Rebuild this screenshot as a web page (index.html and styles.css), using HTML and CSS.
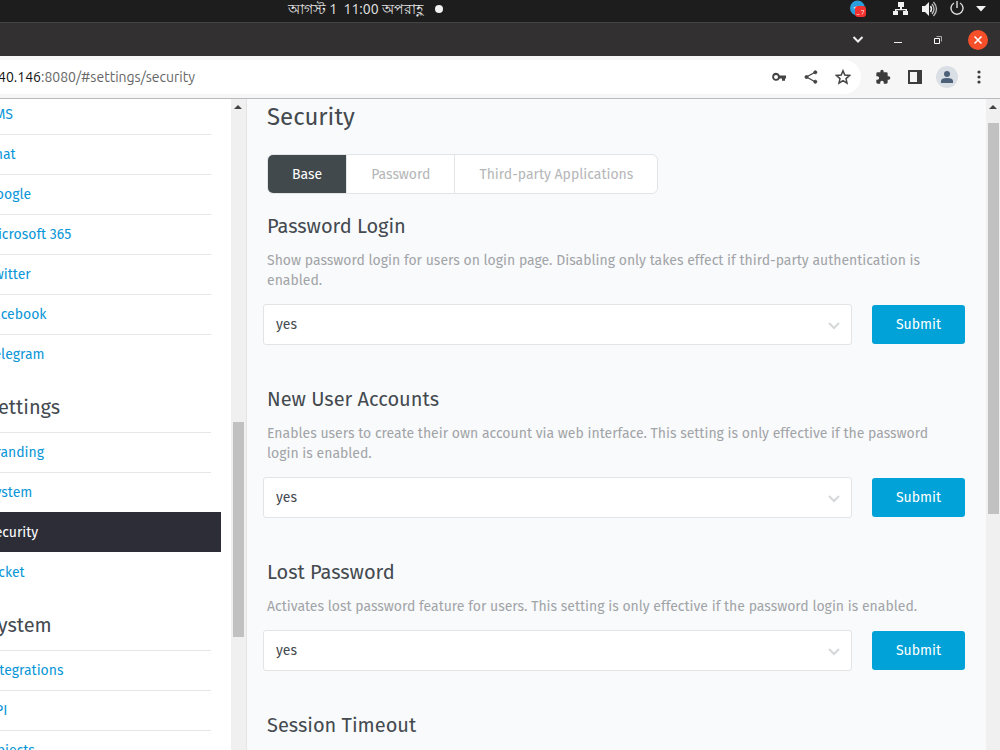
FILE: index.html
```
<!DOCTYPE html>
<html lang="en">
<head>
    <meta charset="UTF-8">
    <meta name="viewport" content="width=device-width, initial-scale=1.0">
    <title>Security</title>
    <link rel="stylesheet" href="styles.css">
</head>
<body>
    <!-- desktop panel -->
    <div class="panel">
        <div class="clock" lang="bn">
            <span>আগস্ট 1&nbsp; 11:00 অপরাহ্ণ</span>
            <span class="dot"></span>
        </div>
        <div class="tray">
            <svg class="tray-chat" width="17" height="17" viewBox="0 0 17 17">
                <circle cx="7.500" cy="8" r="7.500" fill="#2a9fdc"/>
                <path d="M3 8l4-2v3z" fill="#fff"/>
                <rect x="5" y="6" width="11" height="11" rx="3" fill="#f3312f"/>
                <path d="M6.500 14.500h3M11 10.500h3l-2 4" fill="none" stroke="#f9a8a4" stroke-width="1"/>
            </svg>
            <svg class="tray-net" width="16" height="15" viewBox="0 0 16 15" fill="#f2f2f2">
                <rect x="5" y="1" width="6" height="5"/>
                <path d="M7 6h2v2h5v3h-1.500V9.200h-9V11H2V8h5z"/>
                <rect x="0" y="10" width="5" height="4"/>
                <rect x="10" y="10" width="5" height="4"/>
            </svg>
            <svg class="tray-sound" width="17" height="16" viewBox="0 0 17 16">
                <path d="M1 5h3l4-4v14l-4-4H1z" fill="#f2f2f2"/>
                <path d="M9.500 5q2 3 0 6" fill="none" stroke="#f2f2f2" stroke-width="1.500"/>
                <path d="M11 3q4 5 0 10M12.500 1q6 7 0 14" fill="none" stroke="#bbb" stroke-width="1.300"/>
            </svg>
            <svg class="tray-power" width="14" height="16" viewBox="0 0 14 16" fill="none" stroke="#dedede" stroke-width="1.400">
                <path d="M7 0v7M4 2a6 6 0 1 0 6 0"/>
            </svg>
            <svg width="10" height="6" viewBox="0 0 10 6"><path d="M0 0h10L5 5.500z" fill="#f2f2f2"/></svg>
        </div>
    </div>

    <!-- window title bar -->
    <div class="titlebar">
        <button class="win-btn" aria-label="Search tabs">
            <svg width="12" height="12" viewBox="0 0 12 12" fill="none" stroke="#eee" stroke-width="2"><path d="M1.500 3L6 7.500 10.500 3"/></svg>
        </button>
        <button class="win-btn" aria-label="Minimize">
            <svg width="10" height="12" viewBox="0 0 10 12"><path d="M1 8h8v1H1z" fill="#eee"/></svg>
        </button>
        <button class="win-btn" aria-label="Restore">
            <svg width="10" height="10" viewBox="0 0 10 10" fill="none"><path d="M3.500 1.500h5v5" stroke="#aaa"/><path d="M1.500 3.500h5v5h-5z" stroke="#fff"/></svg>
        </button>
        <button class="win-btn win-close" aria-label="Close">
            <svg width="10" height="10" viewBox="0 0 10 10" stroke="#fff" stroke-width="1.500"><path d="M1.500 1.500l7 7M8.500 1.500l-7 7"/></svg>
        </button>
    </div>

    <!-- address bar -->
    <div class="toolbar">
        <div class="omnibox">
            <div class="url"><b>40.146</b>:8080/#settings/security</div>
            <button class="tool" aria-label="Passwords">
                <svg width="16" height="16" viewBox="0 0 16 16"><path fill-rule="evenodd" d="M5 3.800a4 4 0 0 1 3.800 2.700H15v3h-1v2.200h-3V9.500H8.800A4 4 0 1 1 5 3.800zM5 6a2 2 0 1 0 0 4 2 2 0 0 0 0-4z" fill="#444"/></svg>
            </button>
            <button class="tool" aria-label="Share">
                <svg width="14" height="14" viewBox="0 0 14 14" fill="#444" stroke="#444"><path d="M11.500 2L2.500 7l9 5" fill="none" stroke-width="1.300"/><circle cx="11.300" cy="2.300" r="1.500"/><circle cx="2.500" cy="7" r="1.500"/><circle cx="11.300" cy="11.700" r="1.500"/></svg>
            </button>
            <button class="tool" aria-label="Bookmark this tab">
                <svg width="16" height="16" viewBox="0 0 16 16" fill="none" stroke="#444" stroke-width="1.500"><path d="M8 1.800l1.800 4.300 4.700.4-3.500 3.100 1 4.600-4-2.500-4 2.500 1-4.600-3.500-3.100 4.700-.4z"/></svg>
            </button>
        </div>
        <button class="tool" aria-label="Extensions">
            <svg width="16" height="16" viewBox="0 0 24 24" fill="#3c3c3c"><path d="M20.500 11H19V7a2 2 0 0 0-2-2h-4V3.500a2.500 2.500 0 0 0-5 0V5H4a2 2 0 0 0-2 2v3.800h1.500a2.700 2.700 0 0 1 0 5.400H2V20c0 1.100.9 2 2 2h3.800v-1.500a2.700 2.700 0 0 1 5.400 0V22H17a2 2 0 0 0 2-2v-4h1.500a2.500 2.500 0 0 0 0-5z"/></svg>
        </button>
        <button class="tool" aria-label="Side panel">
            <svg width="14" height="14" viewBox="0 0 14 14"><path fill-rule="evenodd" d="M0 0h14v14H0zM2 2v10h7V2z" fill="#3c3c3c"/></svg>
        </button>
        <button class="tool" aria-label="Profile">
            <svg width="22" height="22" viewBox="0 0 22 22"><circle cx="11" cy="11" r="11" fill="#dadfe5"/><circle cx="11" cy="8" r="3" fill="#4d6079"/><path d="M5 17v-2q0-3 6-3t6 3v2z" fill="#4d6079"/></svg>
        </button>
        <button class="tool" aria-label="Menu">
            <svg width="4" height="14" viewBox="0 0 4 14" fill="#3c3c3c"><circle cx="2" cy="2" r="1.600"/><circle cx="2" cy="7" r="1.600"/><circle cx="2" cy="12" r="1.600"/></svg>
        </button>
    </div>

    <div class="app">
        <nav class="sidebar">
            <div class="sidebar-list">
                <a href="#channels/sms">SMS</a>
                <a href="#channels/chat">Chat</a>
                <a href="#channels/google">Google</a>
                <a href="#channels/microsoft365">Microsoft 365</a>
                <a href="#channels/twitter">Twitter</a>
                <a href="#channels/facebook">Facebook</a>
                <a href="#channels/telegram">Telegram</a>
                <h2>Settings</h2>
                <a href="#settings/branding">Branding</a>
                <a href="#settings/system">System</a>
                <a class="active" href="#settings/security">Security</a>
                <a href="#settings/ticket">Ticket</a>
                <h2>System</h2>
                <a href="#system/integration">Integrations</a>
                <a href="#system/api">API</a>
                <a href="#system/objects">Objects</a>
            </div>
        </nav>
        <div class="scrollbar scrollbar-side">
            <svg class="arrow" width="8" height="4" viewBox="0 0 8 4"><path d="M4 0l4 4H0z" fill="#444"/></svg>
            <div class="thumb"></div>
        </div>

        <main class="content">
            <h1>Security</h1>
            <div class="tabs">
                <button class="tab active">Base</button>
                <button class="tab">Password</button>
                <button class="tab">Third-party Applications</button>
            </div>

            <form class="setting">
                <h2><label for="password_login">Password Login</label></h2>
                <p>Show password login for users on login page. Disabling only takes effect if third-party authentication is enabled.</p>
                <div class="row">
                    <div class="select">
                        <select id="password_login"><option>yes</option><option>no</option></select>
                        <svg width="12" height="8" viewBox="0 0 12 8"><path d="M1 1l5 5 5-5"/></svg>
                    </div>
                    <button class="submit" type="submit">Submit</button>
                </div>
            </form>

            <form class="setting">
                <h2><label for="new_accounts">New User Accounts</label></h2>
                <p>Enables users to create their own account via web interface. This setting is only effective if the password login is enabled.</p>
                <div class="row">
                    <div class="select">
                        <select id="new_accounts"><option>yes</option><option>no</option></select>
                        <svg width="12" height="8" viewBox="0 0 12 8"><path d="M1 1l5 5 5-5"/></svg>
                    </div>
                    <button class="submit" type="submit">Submit</button>
                </div>
            </form>

            <form class="setting">
                <h2><label for="lost_password">Lost Password</label></h2>
                <p>Activates lost password feature for users. This setting is only effective if the password login is enabled.</p>
                <div class="row">
                    <div class="select">
                        <select id="lost_password"><option>yes</option><option>no</option></select>
                        <svg width="12" height="8" viewBox="0 0 12 8"><path d="M1 1l5 5 5-5"/></svg>
                    </div>
                    <button class="submit" type="submit">Submit</button>
                </div>
            </form>

            <form class="setting">
                <h2>Session Timeout</h2>
            </form>
        </main>
        <div class="scrollbar scrollbar-main">
            <svg class="arrow" width="8" height="4" viewBox="0 0 8 4"><path d="M4 0l4 4H0z" fill="#444"/></svg>
            <div class="thumb"></div>
        </div>
    </div>
</body>
</html>
```
FILE: styles.css
```
* {
    box-sizing: border-box;
}
body {
    margin: 0;
    height: 100vh;
    display: flex;
    flex-direction: column;
    overflow: hidden;
    font-family: "Fira Sans", "Noto Sans CJK SC", sans-serif;
    font-size: 14px;
    line-height: 20px;
    color: #444a4f;
    background: #f9fafc;
}
h1, h2, p {
    margin: 0;
    font-weight: normal;
}
button, select {
    font: inherit;
    color: inherit;
    border: none;
    padding: 0;
    background: none;
}
svg {
    display: block;
    flex: none;
}

/* desktop panel */
.panel {
    flex: none;
    height: 23px;
    display: flex;
    justify-content: space-between;
    background: #1d1d1d;
    border-bottom: 1px solid #454343;
    color: #e6e6e6;
    font-family: Ubuntu, "Noto Sans", sans-serif;
}
.clock {
    display: flex;
    align-items: center;
    gap: 12px;
    height: 17px;
    padding-left: 288px;
    white-space: nowrap;
}
.dot {
    width: 8px;
    height: 8px;
    border-radius: 50%;
    background: #f2f2f2;
}
.tray {
    display: flex;
    align-items: center;
    gap: 12px;
    height: 17px;
    padding-right: 14px;
}
.tray-chat {
    margin-right: 14px;
}

/* window title bar */
.titlebar {
    flex: none;
    height: 33px;
    display: flex;
    justify-content: flex-end;
    align-items: center;
    gap: 20px;
    padding-right: 12px;
    background: #323030;
}
.win-btn {
    width: 20px;
    height: 20px;
    display: flex;
    align-items: center;
    justify-content: center;
}
.win-close {
    border-radius: 50%;
    background: #f64f29;
}

/* address bar */
.toolbar {
    flex: none;
    height: 43px;
    display: flex;
    align-items: center;
    gap: 8px;
    padding-right: 9px;
    background: #f6f6f6;
    border-bottom: 1px solid #b9babd;
}
.omnibox {
    flex: 1;
    height: 34px;
    display: flex;
    align-items: center;
    gap: 8px;
    margin-right: 2px;
    padding-right: 6px;
    border-radius: 0 17px 17px 0;
    background: #fff;
}
.url {
    flex: 1;
    color: #666;
    font-family: Ubuntu, "Noto Sans", sans-serif;
    text-indent: -2px;
}
.url b {
    font-weight: normal;
    color: #111;
}
.tool {
    width: 24px;
    height: 24px;
    display: flex;
    align-items: center;
    justify-content: center;
}

/* app */
.app {
    flex: 1;
    min-height: 0;
    display: flex;
}
/* the list is scrolled a little down and to the right */
.sidebar {
    flex: none;
    width: 231px;
    overflow: hidden;
    background: #fff;
}
.sidebar-list {
    margin-top: -5px;
    margin-left: -23px;
}
.sidebar a {
    display: block;
    height: 40px;
    margin-right: 20px;
    padding: 10px 0 10px 10px;
    border-top: 1px solid #e6e6e6;
    line-height: 19px;
    color: #0a96d7;
    text-decoration: none;
}
.sidebar a.active {
    margin-right: 10px;
    border-top-color: #2c2d36;
    color: #fff;
    background: #2c2d36;
}
.sidebar a.active + a {
    border-top-color: transparent;
}
.sidebar h2 {
    height: 58px;
    padding: 19px 0 0 10px;
    font-size: 20px;
    line-height: 28px;
}
.scrollbar {
    flex: none;
    width: 14px;
    background: #f0f0f0;
}
.scrollbar-side {
    width: 16px;
    padding-right: 1px;
    border-right: 1px solid #e3e4e6;
}
.arrow {
    margin: 6px auto 12px;
}
.thumb {
    width: 11px;
    margin: 0 auto;
    background: #c1c1c1;
}
.scrollbar-side .thumb {
    height: 33%;
    margin-top: 313px;
}
.scrollbar-main .thumb {
    height: 60%;
    margin: 14px 1px 0 2px;
}

.content {
    flex: 1;
    min-width: 0;
    padding: 4px 21px 0 20px;
    overflow: hidden;
}
h1 {
    font-size: 24px;
    line-height: 28px;
    margin-bottom: 23px;
}
.tabs {
    display: inline-flex;
    height: 40px;
    margin-bottom: 18px;
    border: 1px solid #e3e4e6;
    border-radius: 6px;
    overflow: hidden;
    background: #fff;
    vertical-align: top;
}
.tab {
    padding: 1px 24px 0;
    color: #b4b6b8;
}
.tab + .tab {
    border-left: 1px solid #e3e4e6;
}
.tab.active {
    color: #fff;
    background: #42494d;
}
.setting {
    margin-bottom: 40px;
}
.setting h2 {
    font-size: 20px;
    line-height: 28px;
    margin-bottom: 11px;
}
.setting p {
    margin-bottom: 13px;
    padding-right: 20px;
    color: #a1a4a7;
}
.row {
    display: flex;
    align-items: center;
    gap: 20px;
    margin-left: -4px;
}
.select {
    flex: 1;
    position: relative;
}
.select select {
    display: block;
    width: 100%;
    height: 41px;
    padding: 0 12px;
    appearance: none;
    border: 1px solid #e3e4e6;
    border-radius: 3px;
    background: #fff;
}
.select svg {
    position: absolute;
    right: 12px;
    top: 18px;
    fill: none;
    stroke: #d5d7d9;
    stroke-width: 2;
    pointer-events: none;
}
.submit {
    height: 39px;
    padding: 0 24px;
    border-radius: 3px;
    color: #fff;
    background: #00a2d7;
}
```
